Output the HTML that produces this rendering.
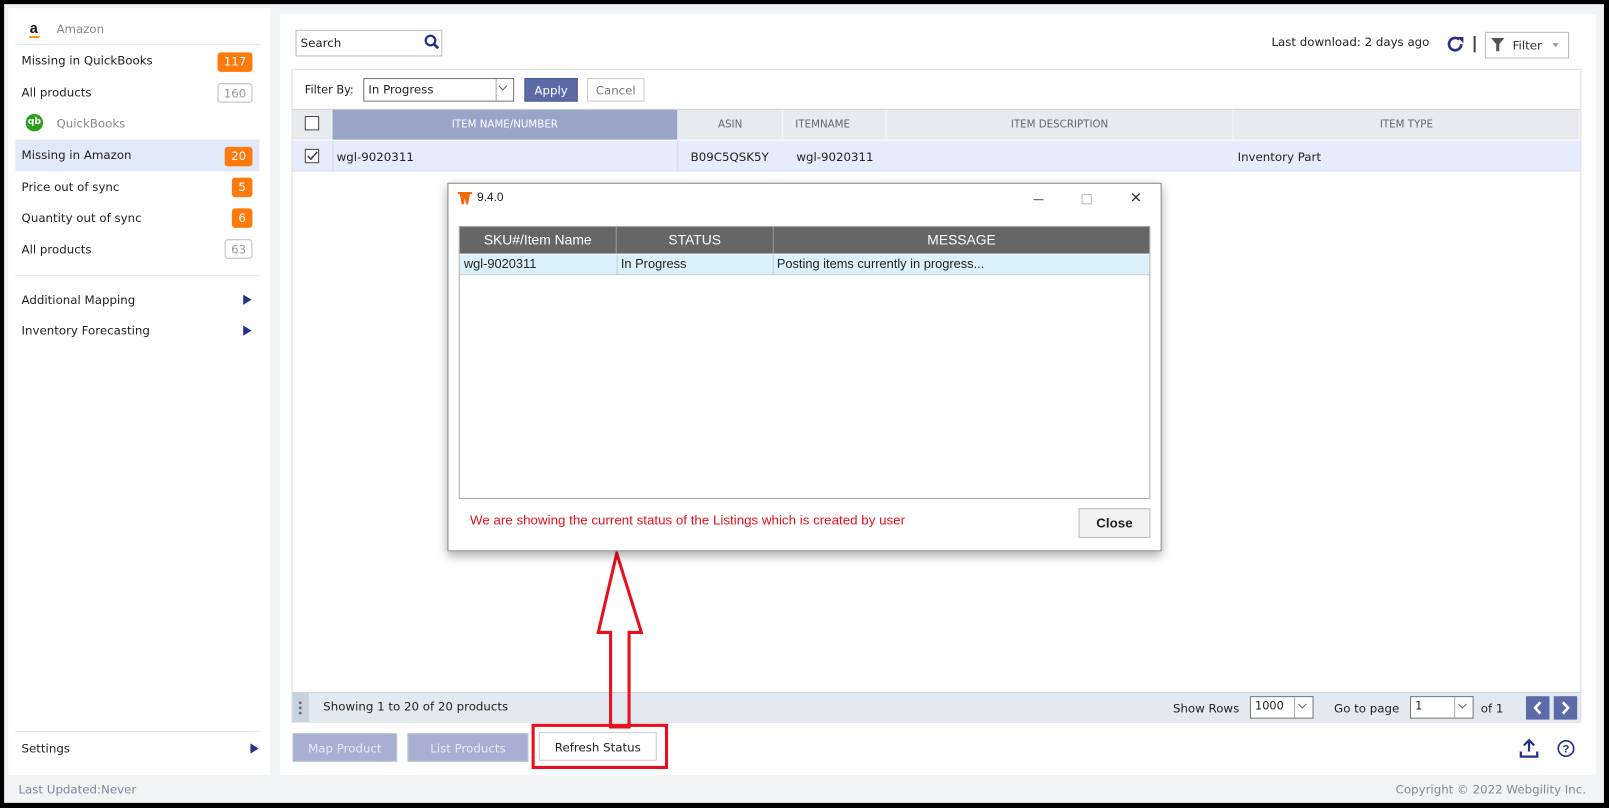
<!DOCTYPE html>
<html><head><meta charset="utf-8"><style>
*{box-sizing:border-box;margin:0;padding:0}
html,body{width:1609px;height:808px;overflow:hidden;background:#000}
#w{position:absolute;left:0;top:0;width:1568px;height:787px;transform:scale(1.0262,1.0267);transform-origin:0 0;font-family:"DejaVu Sans","Liberation Sans",sans-serif;font-size:11.5px;color:#222}
.a{position:absolute}
.bg{left:4px;top:4px;width:1559px;height:778px;background:#f2f3f5}
.badge{position:absolute;right:17px;height:19px;border-radius:3px;background:#ff7a0d;color:#fff;text-align:center;line-height:19px;font-size:11.5px}
.bo{background:#fff;border:1px solid #bbb;color:#999}
.item{position:absolute;left:21px}
.tri{position:absolute;width:0;height:0;border-left:8px solid #26308a;border-top:5.5px solid transparent;border-bottom:5.5px solid transparent}
.hd{position:absolute;top:107px;height:29px;line-height:29px;text-align:center;font-size:10px;color:#666;background:#e7ebf0;border-right:1px solid #f5f5f5}
.btn{position:absolute;height:28px;line-height:28px;text-align:center;font-size:11.5px}
.dlg{font-family:"Liberation Sans",sans-serif}
</style></head><body><div id="w">
<div class="a bg"></div>
<div class="a" style="left:8px;top:8px;width:255px;height:747px;background:#fff"></div>
<div class="a" style="left:29px;top:19px;font-family:'Liberation Sans',sans-serif;font-weight:bold;font-size:14px;color:#111">a</div>
<div class="a" style="left:28px;top:35px;width:11px;height:2px;border-bottom:2px solid #f90;border-radius:0 0 6px 6px"></div>
<div class="a" style="left:55px;top:21px;color:#888">Amazon</div>
<div class="a" style="left:15px;top:43px;width:238px;height:1px;background:#e4e4e4"></div>
<div class="item" style="top:52px">Missing in QuickBooks</div><div class="badge" style="top:51px;right:auto;left:212px;width:34px">117</div>
<div class="item" style="top:83px">All products</div><div class="badge bo" style="top:81px;left:212px;width:34px">160</div>
<div class="a" style="left:25px;top:111px;width:17px;height:17px;border-radius:50%;background:#2ca01c;color:#fff;font-size:9px;font-weight:bold;text-align:center;line-height:17px">qb</div>
<div class="a" style="left:55px;top:113px;color:#888">QuickBooks</div>
<div class="a" style="left:15px;top:136px;width:238px;height:1px;background:#e4e4e4"></div>
<div class="a" style="left:15px;top:137px;width:238px;height:30px;background:#e1eaf8"></div>
<div class="item" style="top:144px">Missing in Amazon</div><div class="badge" style="top:143px;left:219px;width:27px">20</div>
<div class="item" style="top:175px">Price out of sync</div><div class="badge" style="top:173px;left:226px;width:20px">5</div>
<div class="item" style="top:205px">Quantity out of sync</div><div class="badge" style="top:203px;left:226px;width:20px">6</div>
<div class="item" style="top:236px">All products</div><div class="badge bo" style="top:233px;left:219px;width:27px">63</div>
<div class="a" style="left:15px;top:268px;width:238px;height:1px;background:#e4e4e4"></div>
<div class="item" style="top:285px">Additional Mapping</div><div class="tri" style="left:237px;top:287px"></div>
<div class="item" style="top:315px">Inventory Forecasting</div><div class="tri" style="left:237px;top:317px"></div>
<div class="a" style="left:15px;top:712px;width:238px;height:1px;background:#e4e4e4"></div>
<div class="item" style="top:722px">Settings</div><div class="tri" style="left:244px;top:724px"></div>
<div class="a" style="left:18px;top:762px;color:#8088a0">Last Updated:Never</div>
<div class="a" style="left:1360px;top:762px;color:#888">Copyright © 2022 Webgility Inc.</div>
<div class="a" style="left:273px;top:14px;width:1282px;height:741px;background:#fff"></div>
<div class="a" style="left:288px;top:29px;width:143px;height:26px;border:1px solid #bbb"></div>
<div class="a" style="left:293px;top:35px">Search</div>
<svg class="a" style="left:413px;top:33px" width="16" height="16" viewBox="0 0 16 16"><circle cx="6.5" cy="6.5" r="4.7" fill="none" stroke="#26308a" stroke-width="2.2"/><path d="M10 10l4 4" stroke="#26308a" stroke-width="2.6"/></svg>
<div class="a" style="left:1239px;top:34px">Last download: 2 days ago</div>
<svg class="a" style="left:1409px;top:33px" width="20" height="20" viewBox="0 0 20 20"><path d="M15 10a6 6 0 1 1-2-4.5" fill="none" stroke="#26308a" stroke-width="2.6"/><path d="M11 3h6v6z" fill="#26308a"/></svg>
<div class="a" style="left:1436px;top:35px;width:2px;height:16px;background:#444"></div>
<div class="a" style="left:1447px;top:31px;width:82px;height:26px;border:1px solid #bbb"></div>
<svg class="a" style="left:1453px;top:37px" width="13" height="13" viewBox="0 0 13 13"><path d="M0 0h13L8 6v7H5V6z" fill="#555"/></svg>
<div class="a" style="left:1474px;top:37px;color:#333">Filter</div>
<div class="a" style="left:1513px;top:42px;border-top:4px solid #999;border-left:3px solid transparent;border-right:3px solid transparent"></div>
<div class="a" style="left:284px;top:67px;width:1257px;height:637px;border:1px solid #ddd"></div>
<div class="a" style="left:297px;top:81px;font-size:11px">Filter By:</div>
<div class="a" style="left:354px;top:76px;width:147px;height:23px;border:1px solid #777;background:#fff"></div>
<div class="a" style="left:359px;top:80px">In Progress</div>
<div class="a" style="left:483px;top:77px;width:1px;height:21px;background:#aaa"></div>
<div class="a" style="left:487px;top:81px;width:6px;height:6px;border-right:1px solid #666;border-bottom:1px solid #666;transform:rotate(45deg)"></div>
<div class="btn" style="left:511px;top:76px;width:52px;height:23px;line-height:23px;background:#5c6ba8;color:#fff;border:1px solid #4a5890">Apply</div>
<div class="btn" style="left:572px;top:76px;width:56px;height:23px;line-height:23px;background:#fff;color:#777;border:1px solid #ccc">Cancel</div>
<div class="a" style="left:285px;top:106px;width:1255px;height:1px;background:#ccc"></div>
<div class="hd" style="left:285px;width:39px"></div>
<div class="a" style="left:297px;top:113px;width:14px;height:14px;border:1px solid #444;background:#fff"></div>
<div class="hd" style="left:324px;width:337px;background:#98a5c9;color:#fff">ITEM NAME/NUMBER</div>
<div class="hd" style="left:661px;width:102px">ASIN</div>
<div class="hd" style="left:763px;width:101px;text-align:left;padding-left:12px">ITEMNAME</div>
<div class="hd" style="left:864px;width:338px">ITEM DESCRIPTION</div>
<div class="hd" style="left:1202px;width:338px">ITEM TYPE</div>
<div class="a" style="left:285px;top:137px;width:1255px;height:30px;background:#e6ecfb;border-bottom:1px solid #d5dbe6"></div>
<div class="a" style="left:324px;top:137px;width:337px;height:30px;border-left:1px solid #d5dbe6;border-right:1px solid #d5dbe6"></div>
<div class="a" style="left:297px;top:145px;width:14px;height:14px;border:1px solid #444;background:#fff"></div>
<svg class="a" style="left:298px;top:146px" width="12" height="12"><path d="M2 6l3 3 6-7" fill="none" stroke="#333" stroke-width="1.4"/></svg>
<div class="a" style="left:328px;top:146px">wgl-9020311</div>
<div class="a" style="left:673px;top:146px">B09C5QSK5Y</div>
<div class="a" style="left:776px;top:146px">wgl-9020311</div>
<div class="a" style="left:1206px;top:146px">Inventory Part</div>
<div class="a" style="left:285px;top:674px;width:1255px;height:29px;background:#e3e9f0;border-top:1px solid #d0d6de"></div>
<div class="a" style="left:285px;top:675px;width:16px;height:28px;background:#c6d2df"></div>
<div class="a" style="left:291px;top:682px;width:3px;height:14px;background:radial-gradient(circle,#666 1.2px,transparent 1.5px) 0 0/3px 5px"></div>
<div class="a" style="left:315px;top:681px">Showing 1 to 20 of 20 products</div>
<div class="a" style="left:1143px;top:683px">Show Rows</div>
<div class="a" style="left:1218px;top:678px;width:62px;height:22px;border:1px solid #777;background:#fff"></div>
<div class="a" style="left:1223px;top:681px;font-size:11px">1000</div>
<div class="a" style="left:1261px;top:679px;width:1px;height:20px;background:#aaa"></div>
<div class="a" style="left:1266px;top:683px;width:6px;height:6px;border-right:1px solid #666;border-bottom:1px solid #666;transform:rotate(45deg)"></div>
<div class="a" style="left:1300px;top:683px">Go to page</div>
<div class="a" style="left:1374px;top:678px;width:62px;height:22px;border:1px solid #777;background:#fff"></div>
<div class="a" style="left:1379px;top:681px;font-size:11px">1</div>
<div class="a" style="left:1417px;top:679px;width:1px;height:20px;background:#aaa"></div>
<div class="a" style="left:1422px;top:683px;width:6px;height:6px;border-right:1px solid #666;border-bottom:1px solid #666;transform:rotate(45deg)"></div>
<div class="a" style="left:1443px;top:683px">of 1</div>
<svg class="a" style="left:1487px;top:678px" width="23" height="23"><rect width="23" height="23" fill="#5c6ba8"/><path d="M14 6l-5 5.5 5 5.5" fill="none" stroke="#fff" stroke-width="2.6"/></svg>
<svg class="a" style="left:1514px;top:678px" width="23" height="23"><rect width="23" height="23" fill="#5c6ba8"/><path d="M9 6l5 5.5-5 5.5" fill="none" stroke="#fff" stroke-width="2.6"/></svg>
<div class="btn" style="left:285px;top:714px;width:102px;background:#a9afd3;color:#e8eaf5;border:1px solid #bcc">Map Product</div>
<div class="btn" style="left:397px;top:714px;width:118px;background:#a9afd3;color:#e8eaf5;border:1px solid #bcc">List Products</div>
<div class="a" style="left:518px;top:705px;width:133px;height:44px;border:3px solid #e8101c"></div>
<div class="btn" style="left:525px;top:713px;width:115px;background:#fff;border:1px solid #ccc;color:#222">Refresh Status</div>
<svg class="a" style="left:1479px;top:718px" width="22" height="22" viewBox="0 0 22 22"><path d="M11 3v11M6 8l5-5 5 5M3 14v5h16v-5" fill="none" stroke="#26308a" stroke-width="2.2"/></svg>
<svg class="a" style="left:1517px;top:720px" width="18" height="18" viewBox="0 0 18 18"><circle cx="9" cy="9" r="7.5" fill="none" stroke="#26308a" stroke-width="1.6"/><text x="9" y="13" text-anchor="middle" font-size="11" font-weight="bold" fill="#26308a" font-family="Liberation Sans">?</text></svg>
<svg class="a" style="left:575px;top:535px" width="60" height="175" viewBox="0 0 60 175"><path d="M26 4L8 81h12v92h18V81h12z" fill="none" stroke="#e8101c" stroke-width="3"/></svg>
<div class="a dlg" style="left:436px;top:178px;width:696px;height:359px;background:#fff;border:1px solid #888;box-shadow:0 4px 10px rgba(0,0,0,.35)">
 <svg class="a" style="left:9px;top:8px" width="14" height="12" viewBox="0 0 14 12"><path d="M0 0h14v2h-2L10 12H8L7 6 6 12H4L2 2H0z" fill="#f36a10"/></svg>
 <div class="a" style="left:28px;top:8px;font-size:11.5px;color:#222">9.4.0</div>
 <div class="a" style="left:570px;top:15px;width:10px;height:1px;background:#555"></div>
 <div class="a" style="left:617px;top:10px;width:10px;height:10px;border:1px solid #bbb"></div>
 <div class="a" style="left:664px;top:5px;font-size:14px;color:#333">✕</div>
 <div class="a" style="left:10px;top:41px;width:674px;height:266px;border:1px solid #aaa"></div>
 <div class="a" style="left:11px;top:42px;width:672px;height:26px;background:#666"></div>
 <div class="a" style="left:11px;top:42px;width:153px;height:26px;line-height:26px;color:#fff;font-size:13.5px;text-align:center;border-right:1px solid #999">SKU#/Item Name</div>
 <div class="a" style="left:164px;top:42px;width:153px;height:26px;line-height:26px;color:#fff;font-size:13.5px;text-align:center;border-right:1px solid #999">STATUS</div>
 <div class="a" style="left:317px;top:42px;width:366px;height:26px;line-height:26px;color:#fff;font-size:13.5px;text-align:center">MESSAGE</div>
 <div class="a" style="left:11px;top:69px;width:672px;height:20px;background:#daf1fc;border-bottom:1px solid #ccc"></div>
 <div class="a" style="left:164px;top:69px;width:153px;height:20px;border-left:1px solid #ccc;border-right:1px solid #ccc"></div>
 <div class="a" style="left:15px;top:71px;font-size:12.5px">wgl-9020311</div>
 <div class="a" style="left:168px;top:71px;font-size:12.5px">In Progress</div>
 <div class="a" style="left:320px;top:71px;font-size:12.5px">Posting items currently in progress...</div>
 <div class="a" style="left:21px;top:320px;font-size:13px;color:#e8101c">We are showing the current status of the Listings which is created by user</div>
 <div class="a" style="left:614px;top:316px;width:70px;height:29px;border:1px solid #bbb;background:#f2f2f2;text-align:center;line-height:27px;font-weight:bold;font-size:13px">Close</div>
</div>
</div></body></html>
